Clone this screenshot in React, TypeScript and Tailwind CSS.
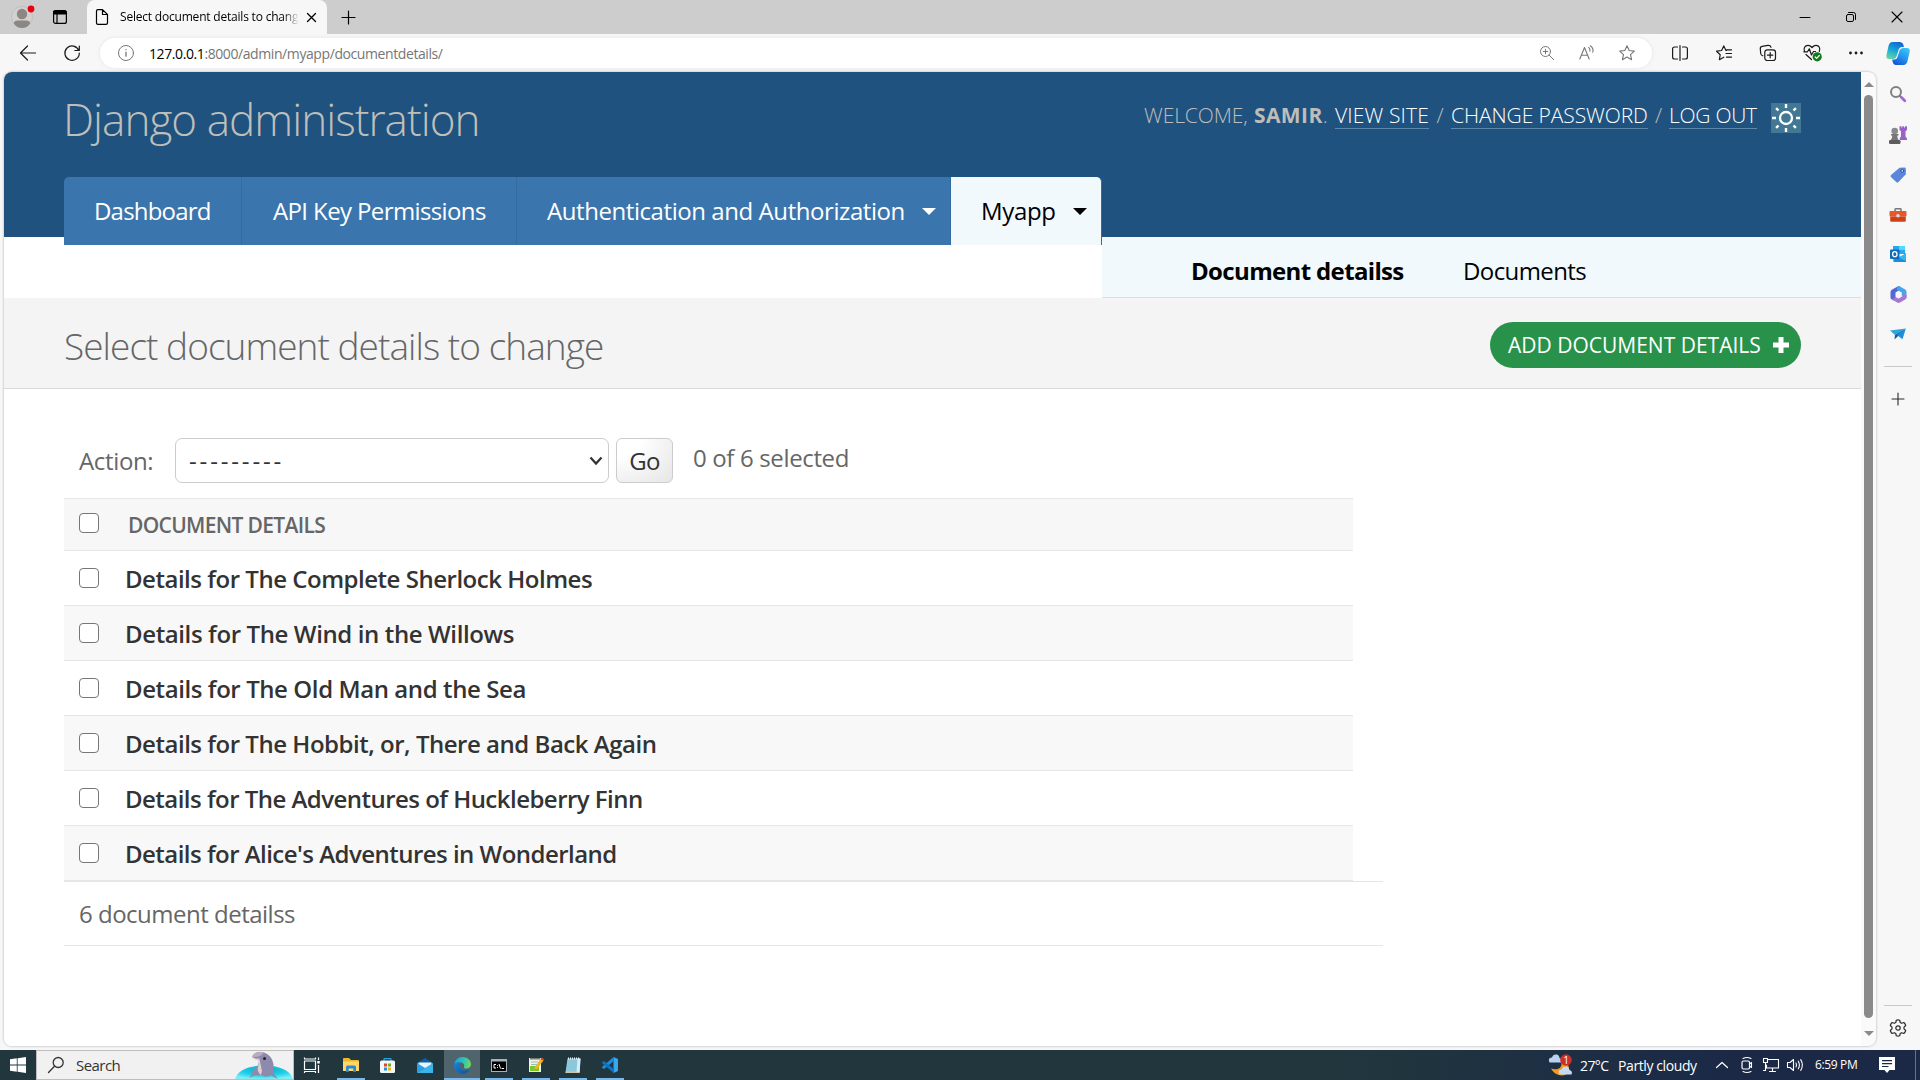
import type { ReactNode } from "react";

const rows = [
  { title: "Details for The Complete Sherlock Holmes", tracking: "tracking-[-0.48px]" },
  { title: "Details for The Wind in the Willows", tracking: "tracking-[-0.38px]" },
  { title: "Details for The Old Man and the Sea", tracking: "tracking-[-0.41px]" },
  { title: "Details for The Hobbit, or, There and Back Again", tracking: "tracking-[-0.475px]" },
  { title: "Details for The Adventures of Huckleberry Finn", tracking: "tracking-[-0.53px]" },
  { title: "Details for Alice's Adventures in Wonderland", tracking: "tracking-[-0.53px]" },
];

function Icon({ size = 20, box = 20, children, className = "" }: { size?: number; box?: number; children: ReactNode; className?: string }) {
  return (
    <svg width={size} height={size} viewBox={`0 0 ${box} ${box}`} fill="none" stroke="currentColor" strokeLinecap="round" strokeLinejoin="round" className={`shrink-0 overflow-visible ${className}`}>
      {children}
    </svg>
  );
}

function TitleBar() {
  return (
    <div className="flex h-[34px] shrink-0 bg-[#cdcdcd] text-black">
      <div className="flex w-[87px] items-center pl-[11px]">
        <Icon size={22} box={22}>
          <circle cx="11" cy="11" r="10.5" fill="#d3d1cf" stroke="#c3bfba" strokeWidth="1" />
          <circle cx="11" cy="8" r="5.2" fill="#8b8785" stroke="none" />
          <path d="M2.8 17.5c0-2 2-3 3.500-3h9.400c1.500 0 3.500 1 3.500 3-2 3-5 4.500-8.200 4.500s-6.200-1.500-8.200-4.500z" fill="#8b8785" stroke="none" />
          <circle cx="20" cy="3" r="3.400" fill="#e80010" stroke="none" />
        </Icon>
        <Icon size={14} box={14} className="ml-5">
          <rect x="0.600" y="0.600" width="12.800" height="12.800" rx="2" strokeWidth="1.200" />
          <path d="M1 1h12v3H1z" fill="#000" strokeWidth="1" />
          <path d="M4 4v9" strokeWidth="1.200" />
        </Icon>
      </div>
      <div className="flex w-[240px] items-center rounded-t-[8px] bg-[#f7f7f7] pl-[8px]">
        <Icon size={16} box={16} className="mr-[9px]">
          <path d="M1.500 2Q1.500.6 3 .6H7.500L12.500 5.500V14Q12.500 15.400 11 15.400H3Q1.500 15.400 1.500 14ZM7.500.8V5.500H12.400" strokeWidth="1.200" />
        </Icon>
        <div className="w-[178px] overflow-hidden whitespace-nowrap bg-gradient-to-r from-black from-90% to-[#e8e8e8] bg-clip-text text-[12px] tracking-[-0.2px] text-transparent">
          Select document details to change
        </div>
        <Icon size={9} box={9} className="ml-[9px]">
          <path d="M.5.500 8.500 8.500M8.500.500.500 8.500" strokeWidth="1.300" />
        </Icon>
      </div>
      <div className="flex flex-1 items-center pl-[15px]">
        <Icon size={13} box={13}>
          <path d="M6.500 0v13M0 6.500h13" strokeWidth="1.200" />
        </Icon>
      </div>
      <div className="flex w-[138px] items-center">
        <div className="flex w-[46px] justify-center"><Icon size={10} box={10}><path d="M0 5.500h10" strokeWidth="1" /></Icon></div>
        <div className="flex w-[46px] justify-center">
          <Icon size={10} box={10}>
            <rect x="0.500" y="2.500" width="7" height="7" rx="1.500" strokeWidth="1" />
            <path d="M2.500.500H7.500Q9.500.500 9.500 2.500V7.500" strokeWidth="1" />
          </Icon>
        </div>
        <div className="flex w-[46px] justify-center"><Icon size={10} box={10}><path d="M0 0 10 10M10 0 0 10" strokeWidth="1.100" /></Icon></div>
      </div>
    </div>
  );
}

const STAR = "M8 .8 10.200 5.500 15.300 6.100 11.500 9.600 12.600 14.700 8 12.100 3.400 14.700 4.500 9.600.7 6.100 5.800 5.500Z";

function Toolbar() {
  return (
    <div className="flex h-[38px] shrink-0 items-center bg-[#f7f7f7] text-[#1b1b1b]">
      <div className="flex w-[100px] items-center pl-5">
        <Icon size={16} box={16}><path d="M15.500 8H.500M7.500 1 .500 8 7.500 15" strokeWidth="1.200" /></Icon>
        <Icon size={16} box={16} className="ml-7">
          <path d="M14.800 5.500A7.200 7.200 0 1 0 15.300 8M15.300 1V5.500H10.800" strokeWidth="1.200" />
        </Icon>
      </div>
      <div className="flex h-[30px] w-[1552px] items-center rounded-full bg-white pr-[5px] pl-[18px] text-[#767676] shadow-[0_0_4px_rgba(0,0,0,0.08)]">
        <Icon size={16} box={16}>
          <circle cx="8" cy="8" r="7.500" strokeWidth="1" />
          <path d="M8 7.200v4M8 4.600v.1" strokeWidth="1.300" />
        </Icon>
        <div className="ml-[15px] flex-1 text-[14px] tracking-[-0.41px] text-[#767676]">
          <span className="text-black">127.0.0.1</span>:8000/admin/myapp/documentdetails/
        </div>
        <div className="flex w-10 justify-center">
          <Icon size={14} box={14}>
            <circle cx="5.500" cy="5.500" r="5" strokeWidth="1" />
            <path d="M9.200 9.200 13.700 13.700M5.500 3.300V7.700M3.300 5.500H7.700" strokeWidth="1" />
          </Icon>
        </div>
        <div className="flex w-10 justify-center">
          <Icon size={16} box={16}>
            <path d="M.8 14 5.500 2.500 10.200 14M2.500 10.200H8.600M9.700 2.400Q11.500 4 10.900 6.200M11.300.8Q15 3.500 13.800 7.200" strokeWidth="1.100" />
          </Icon>
        </div>
        <div className="flex w-10 justify-center"><Icon size={16} box={16}><path d={STAR} strokeWidth="1.100" /></Icon></div>
      </div>
      <div className="flex pl-[6px]">
        <div className="flex w-11 items-center justify-center">
          <Icon size={16} box={16}><path d="M5.500 2H2.500Q.600 2 .600 4V12Q.600 14 2.500 14H5.500M10.500 2H13.500Q15.400 2 15.400 4V12Q15.400 14 13.500 14H10.500M8 .5V15.500" strokeWidth="1.200" /></Icon>
        </div>
        <div className="flex w-11 items-center justify-center">
          <Icon size={16} box={16}>
            <path d="M10.500 5.500H10L7.800.9 5.600 5.500.6 6.200 4.200 9.700 3.400 14.700 7.800 12.200M10.500 4.800H15.500M10 8.500H15.500M10.500 12.200H15.500" strokeWidth="1.200" />
          </Icon>
        </div>
        <div className="flex w-11 items-center justify-center">
          <Icon size={16} box={16}>
            <rect x="4.800" y="4.800" width="10.700" height="10.700" rx="2.500" strokeWidth="1.200" />
            <path d="M10.200 7.500V12.800M7.500 10.200H12.800M2.800 10.800Q1 10.200.700 8.500L.3 4Q.1 1.800 2 1.400L8 .4Q10.300.2 11 2.200" strokeWidth="1.200" />
          </Icon>
        </div>
        <div className="flex w-11 items-center justify-center">
          <Icon size={18} box={18}>
            <path d="M1.500 7.500C.3 4.500 1.800 1.300 5 1.300 7 1.300 8 2.300 9 3.500 10 2.300 11 1.300 13 1.300 16.300 1.300 17.500 4.500 16.300 7.500M3 10.500 8.500 15.500M.8 7.800H4.500L6.300 4.800 8.500 11 10.500 7.500H12.500" strokeWidth="1.200" />
            <circle cx="14.200" cy="12.800" r="4.600" fill="#117a1a" stroke="none" />
            <path d="M12.200 13 13.600 14.300 16.300 11.500" stroke="#fff" strokeWidth="1.200" />
          </Icon>
        </div>
        <div className="flex w-11 items-center justify-center">
          <Icon size={16} box={16}><path d="M2.500 8h.01M8 8h.01M13.500 8h.01" strokeWidth="2.800" /></Icon>
        </div>
        <div className="flex w-10 items-center justify-center"><Copilot /></div>
      </div>
    </div>
  );
}

function Copilot() {
  return (
    <svg width="24" height="23" viewBox="0 0 24 23" className="shrink-0">
      <defs>
        <linearGradient id="cpA" x1="0.600" y1="0" x2="0.200" y2="1"><stop offset="0" stopColor="#1268d0" /><stop offset="0.450" stopColor="#12a3d8" /><stop offset="1" stopColor="#66d7a4" /></linearGradient>
        <linearGradient id="cpB" x1="0.800" y1="0" x2="0.200" y2="1"><stop offset="0" stopColor="#38c6f4" /><stop offset="0.500" stopColor="#2493f0" /><stop offset="1" stopColor="#1354d4" /></linearGradient>
      </defs>
      <path d="M6.500 0H14Q16.500 0 17.300 2.500L18 5H15.500Q13.500 5 12.700 7.500L10.500 14.500Q9.700 17 7 17H3Q0 17 .4 13.500L2.500 4Q3.500 0 6.500 0Z" fill="url(#cpA)" />
      <path d="M17.500 23H10Q7.500 23 6.700 20L6.200 17.500H8.500Q10.800 17.500 11.500 15L13.500 8.500Q14.300 6 17 6H21Q24.300 6 23.700 9.500L21.500 19Q20.500 23 17.500 23Z" fill="url(#cpB)" />
    </svg>
  );
}

function Slot({ children }: { children: ReactNode }) {
  return <div className="flex h-10 w-full shrink-0 items-center justify-center">{children}</div>;
}

function Sidebar() {
  return (
    <div className="flex w-[44px] shrink-0 flex-col items-center pt-[2px] text-[#2b2b2b]">
      <Slot>
        <Icon size={16} box={16}>
          <circle cx="6" cy="6" r="5" stroke="#808080" strokeWidth="2" />
          <path d="M10 10 11 11" stroke="#777" strokeWidth="2" />
          <path d="M11.500 11.500 14.800 14.800" stroke="#a466d6" strokeWidth="2.800" />
        </Icon>
      </Slot>
      <Slot>
        <Icon size={18} box={18} className="mt-[1px]">
          <g stroke="none">
            <path d="M10.500.3H12.400V1.500H13.300V.3H15V1.500H16V.3H18V4L16.500 5.200V10.500L18 12.500V14H10.800V12L12 10.500V5.200L10.500 4Z" fill="#9a62c8" />
            <circle cx="5.700" cy="5" r="3.300" fill="#8a8a8a" />
            <path d="M2 8H9.500V9.500H8.300C8.300 12 9 13.500 10.500 14.500H1C2.500 13.500 3.200 12 3.200 9.500H2Z" fill="#777" />
            <rect x="0" y="14" width="11.500" height="4" rx="1.300" fill="#5d5d5d" />
          </g>
        </Icon>
      </Slot>
      <Slot>
        <Icon size={16} box={16} className="mt-[1px]">
          <path d="M9.500.8 14.500.5Q15.800.5 15.800 1.800V7.300L8.500 15Q7.300 16 6.200 15L.9 10Q0 9 1 8Z" fill="#5b86dc" stroke="none" />
          <circle cx="12.300" cy="3.800" r="1.400" fill="#cfe0ff" stroke="#2d4f9c" strokeWidth="1" />
        </Icon>
      </Slot>
      <Slot>
        <Icon size={18} box={18} className="mt-[1px]">
          <path d="M6 5.500V3.500Q6 2.800 6.700 2.800H11.300Q12 2.800 12 3.500V5.500" stroke="#777" strokeWidth="1.500" />
          <rect x="0.500" y="5" width="17" height="5.500" rx="1" fill="#e8562a" stroke="none" />
          <path d="M1.200 10.500H16.800V14.500Q16.800 15.700 15.600 15.700H2.400Q1.200 15.700 1.200 14.500Z" fill="#cb4118" stroke="none" />
          <circle cx="9" cy="9.800" r="1.800" fill="#dfdfdf" stroke="none" />
        </Icon>
      </Slot>
      <Slot>
        <Icon size={16} box={16}>
          <g stroke="none">
            <path d="M3 0H15V8H3Z" fill="#28a8ea" /><path d="M9 0H15V4H9Z" fill="#50d9ff" />
            <path d="M3 8 9.500 12 16 7V16H3.500Z" fill="#1490df" /><path d="M16 7.500V15L8 11.500Z" fill="#33b7f2" />
            <rect x="0" y="3.500" width="9.500" height="9.500" rx="1" fill="#0f6cbd" />
          </g>
          <ellipse cx="4.800" cy="8.200" rx="2.200" ry="2.500" stroke="#fff" strokeWidth="1.300" />
        </Icon>
      </Slot>
      <Slot>
        <Icon size={17} box={17}>
          <g stroke="none">
            <path d="M8.500 0 1.800 3.700Q.5 4.500.5 6V11.500Q.5 13 2 13.700L5.500 15 5.700 11V6.500L10 3.800V.8Q9.500-.3 8.500 0Z" fill="#5566d8" />
            <path d="M8 .2Q9-.2 10 .5L15.200 3.600Q16.500 4.400 16.500 6V11.500L11.500 9.500V6.500L7 4Q6.800 1 8 .2Z" fill="#44a6ea" />
            <path d="M16.500 9V11.500Q16.500 13 15.200 13.600L10 16.600Q8.500 17.300 7.200 16.600L2 13.600 5.700 11 8.500 12.500 12 10.500 13.500 6.800Z" fill="#a678d4" />
            <path d="M5.700 6.500 8.500 5 11.500 6.500V10.500L8.500 12.300 5.700 10.800Z" fill="#f7f7f7" />
          </g>
        </Icon>
      </Slot>
      <Slot>
        <Icon size={16} box={16}>
          <g stroke="none">
            <path d="M0 4.500 15.800 2.500 5 9Z" fill="#2ea6e0" /><path d="M5 9 15.800 2.500 4.500 13.500Z" fill="#0f5c9c" /><path d="M7 9 15.800 2.500 12.500 13.300Z" fill="#1c8fe0" />
          </g>
        </Icon>
      </Slot>
      <div className="mt-[12px] h-px w-7 bg-[#c9c9c9]" />
      <div className="mt-[12px]"><Slot><Icon size={12} box={12}><path d="M6 0v12M0 6h12" strokeWidth="1.100" /></Icon></Slot></div>
      <div className="mt-auto h-px w-7 bg-[#c9c9c9]" />
      <div className="mt-[2px] -mb-[2px]">
        <Slot>
          <Icon size={18} box={18}>
            <circle cx="9" cy="9" r="2.200" strokeWidth="1.200" />
            <path d="M7.300 1.200Q9 .5 10.700 1.200L11.200 3.500 12.700 4.300 14.900 3.500Q16.300 4.700 16.700 6.500L15 8.100V9.900L16.700 11.500Q16.300 13.300 14.900 14.500L12.700 13.700 11.200 14.500 10.700 16.800Q9 17.500 7.300 16.800L6.800 14.500 5.300 13.700 3.100 14.500Q1.700 13.300 1.300 11.500L3 9.900V8.100L1.300 6.500Q1.700 4.700 3.100 3.500L5.300 4.300 6.800 3.500Z" strokeWidth="1.200" />
          </Icon>
        </Slot>
      </div>
    </div>
  );
}

function Caret() {
  return <svg width="14" height="7" viewBox="0 0 14 7" className="shrink-0"><path d="M0 0H14L7 7Z" fill="currentColor" /></svg>;
}

function Header() {
  return (
    <header className="relative z-10 h-[165px] bg-[#205280]">
      <div className="flex h-[105px] items-start justify-between pr-[60px] pl-[59px]">
        <h1 className="mt-[17px] text-[44px] leading-[60px] font-light tracking-[-0.96px] whitespace-nowrap text-[#bfbfba]">Django administration</h1>
        <div className="mt-[28px] flex items-start text-[21px] leading-[30px] font-light whitespace-nowrap text-[#bdbdb9]">
          <span className="w-[110px] tracking-[-0.1px]">WELCOME,</span>
          <span className="w-[81px]"><b className="font-bold tracking-[0.4px]">SAMIR</b>.</span>
          <span className="h-[29px] w-[94px] border-b border-[#5f87ac] tracking-[0.15px] text-white">VIEW SITE</span>
          <span className="w-[22px] text-center">/</span>
          <span className="h-[29px] w-[197px] border-b border-[#5f87ac] tracking-[-0.08px] text-white">CHANGE PASSWORD</span>
          <span className="w-[21px] text-center">/</span>
          <span className="h-[29px] w-[88px] border-b border-[#5f87ac] tracking-[-0.25px] text-white">LOG OUT</span>
          <span className="mt-[3px] ml-[14px] flex h-[30px] w-[30px] items-center justify-center bg-[#427894] text-white">
            <Icon size={28} box={28}>
              <circle cx="14" cy="14" r="6" strokeWidth="2.300" />
              <path d="M14 0V4M14 24V28M0 14H4M24 14H28M4.100 4.100 6.500 6.500M21.500 21.500 23.900 23.900M4.100 23.900 6.500 21.500M21.500 6.500 23.900 4.100" strokeWidth="2.400" strokeLinecap="butt" />
            </Icon>
          </span>
        </div>
      </div>
      <nav className="ml-[60px] flex h-[68px] w-[1038px] overflow-hidden rounded-t-[5px] text-[24px] whitespace-nowrap text-white">
        <a className="flex w-[178px] items-center border-r border-[#356b9f] bg-[#3b75ad] pl-[30px] tracking-[-0.8px]">Dashboard</a>
        <a className="flex w-[275px] items-center border-r border-[#356b9f] bg-[#3b75ad] pl-[31px] tracking-[-0.62px]">API Key Permissions</a>
        <a className="flex w-[434px] items-center border-r border-[#356b9f] bg-[#3b75ad] pl-[30px] tracking-[-0.43px]"><span className="w-[375px]">Authentication and Authorization</span><Caret /></a>
        <a className="flex flex-1 items-center rounded-tr-[5px] border-r border-[#356b9f] bg-[#f1f9fc] pl-[30px] tracking-[-0.35px] text-black"><span className="w-[92px]">Myapp</span><Caret /></a>
      </nav>
    </header>
  );
}

function Box() {
  return <span className="block h-5 w-5 shrink-0 rounded-[4px] border-[1.5px] border-[#767676] bg-white" />;
}

function Page() {
  return (
    <div className="flex w-[1857px] flex-col bg-white">
      <Header />
      <div className="ml-[1098px] flex h-[61px] items-center border-b border-[#cfe3ee] bg-[#f1f9fc] pt-[7px] pl-[89px] text-[24px] whitespace-nowrap text-black">
        <span className="w-[272px] font-bold tracking-[-0.65px]">Document detailss</span>
        <span className="tracking-[-0.6px]">Documents</span>
      </div>
      <div className="flex h-[91px] shrink-0 items-center justify-between border-b border-[#dadada] bg-[#f4f4f4] pt-[4px] pr-[60px] pl-[60px]">
        <h2 className="pt-[2px] text-[37px] leading-[50px] font-light tracking-[-0.95px] whitespace-nowrap text-[#666]">Select document details to change</h2>
        <a className="flex h-[46px] w-[311px] items-center rounded-full bg-[#28914a] pl-[18px] text-[21px] whitespace-nowrap text-white">
          <span className="w-[265px] pt-[2px]">ADD DOCUMENT DETAILS</span>
          <svg width="16" height="16" viewBox="0 0 16 16"><path d="M5.500 0H10.500V5.500H16V10.500H10.500V16H5.500V10.500H0V5.500H5.500Z" fill="#fff" /></svg>
        </a>
      </div>
      <main className="pt-[49px] pl-[60px] text-[24px] text-[#666]">
        <div className="flex h-[45px] items-center whitespace-nowrap">
          <span className="w-[111px] pt-[1px] pl-[15px] tracking-[-0.35px]">Action:</span>
          <span className="flex h-[45px] w-[434px] items-center justify-between rounded-[7px] border border-[#ccc] pr-[5px] pl-[13px] text-[#333]">
            <span className="pt-[1px] tracking-[2.850px]">---------</span>
            <Icon size={14} box={14}><path d="M1.500 3.500 7 9.500 12.500 3.500" strokeWidth="2.200" strokeLinecap="butt" strokeLinejoin="miter" /></Icon>
          </span>
          <span className="ml-[7px] flex h-[45px] w-[57px] items-center justify-center rounded-[6px] border border-[#ccc] bg-[radial-gradient(ellipse_at_top_left,#ffffff_30%,#dedede_120%)] pt-[1px] tracking-[-0.8px] text-[#333]">Go</span>
          <span className="ml-[20px] pb-[6px] tracking-[-0.35px]">0 of 6 selected</span>
        </div>
        <div className="mt-[15px] flex h-[53px] w-[1289px] items-center border-y border-[#e6e6e6] bg-[#f7f7f7] pl-[15px]">
          <span className="pb-[4px]"><Box /></span>
          <span className="ml-[29px] pt-[2px] text-[21px] font-semibold tracking-[-0.68px]">DOCUMENT DETAILS</span>
        </div>
        {rows.map((r, i) => (
          <div key={r.title} className={`flex h-[55px] w-[1289px] items-center border-b border-[#e6e6e6] pl-[15px] ${i % 2 ? "bg-[#f8f8f8]" : "bg-white"}`}>
            <Box />
            <span className={`ml-[26px] pt-[2px] font-semibold whitespace-nowrap text-[#333] ${r.tracking}`}>{r.title}</span>
          </div>
        ))}
        <div className="flex h-[65px] w-[1319px] items-center border-y border-[#e6e6e6] pl-[15px] tracking-[-0.5px]">6 document detailss</div>
      </main>
    </div>
  );
}

function TaskIcon({ children, open = false, w, active = false }: { children: ReactNode; open?: boolean; w: string; active?: boolean }) {
  return (
    <div className={`flex h-[30px] flex-col items-center justify-between ${w} ${active ? "bg-[#4f646c]" : ""}`}>
      <div className="flex flex-1 items-center pt-[2px]">{children}</div>
      <div className={`h-[2px] ${active ? "w-full" : "w-[28px]"} ${open ? "bg-[#76b9ed]" : ""}`} />
    </div>
  );
}

function Taskbar() {
  return (
    <div className="flex h-[30px] shrink-0 items-center bg-gradient-to-r from-[#21363d] from-70% to-[#1b2947] to-90% text-white">
      <div className="flex w-[36px] justify-center">
        <svg width="16" height="16" viewBox="0 0 16 16" fill="#fff"><path d="M0 2.200 6.800 1.300V7.600H0ZM7.600 1.200 16 0V7.600H7.600ZM0 8.400H6.800V14.700L0 13.800ZM7.600 8.400H16V16L7.600 14.800Z" /></svg>
      </div>
      <div className="flex h-[30px] w-[258px] items-center border border-[#bdbdbd] bg-[#f1f1f1] pl-[11px] text-[#333]">
        <Icon size={16} box={16}><circle cx="10.200" cy="5.500" r="5" strokeWidth="1.300" /><path d="M6.500 9.200.500 15.500" strokeWidth="1.300" /></Icon>
        <span className="ml-[12px] flex-1 text-[15px] tracking-[-0.55px]">Search</span>
        <svg width="58" height="28" viewBox="0 0 58 28">
          <defs><radialGradient id="pool" cx="0.500" cy="0.300" r="0.700"><stop offset="0" stopColor="#0aa6c4" /><stop offset="0.600" stopColor="#1fd0ea" /><stop offset="1" stopColor="#7ceef6" /></radialGradient></defs>
          <path d="M0 28C3 19 14 14.500 29 14.500S55 19 58 28Z" fill="url(#pool)" />
          <path d="M17 6C19 1.500 24 0 29 1.500 36 4 39.500 11 38.500 18L39 23 43 28 36 24.500Q31 27 26 24L19 24.500 14.500 27 19 18Q24 15 24 9.500Z" fill="#8e8aac" />
          <path d="M17 6C19 8 22 7.500 24.500 7.500L25.500 13 27 20 26 24Q22 21 23 16L24 9.500 19 8Z" fill="#d9cfd2" />
          <path d="M17 6Q22 6.500 26 4.500L29 1.500Q22-.5 19 3Z" fill="#b9adc0" />
          <circle cx="29.500" cy="7.500" r="1.500" fill="#1f2235" />
        </svg>
      </div>
      <TaskIcon w="w-[39px] pr-[3px]">
        <Icon size={16} box={16}><path d="M.5 4H11.500V12.500H.500ZM.500.500V2H11.500V.500M.500 16V14.500H11.500V16M14.500.500V3M14.500 8V16" strokeWidth="1.200" strokeLinecap="butt" /><path d="M14.500 4V6.500" strokeWidth="2.500" strokeLinecap="butt" /></Icon>
      </TaskIcon>
      <TaskIcon w="w-[36px]" open>
        <svg width="16" height="14" viewBox="0 0 16 14"><path d="M0 1Q0 0 1 0H6L8 2H15Q16 2 16 3V13H0Z" fill="#f2b52b" /><path d="M0 3.500H16V13H0Z" fill="#ffd868" /><path d="M3 14V9Q3 7.500 4.500 7.500H11.500Q13 7.500 13 9V14H10.300V10.500H5.700V14Z" fill="#2f87d0" /></svg>
      </TaskIcon>
      <TaskIcon w="w-[37px]">
        <svg width="15" height="15" viewBox="0 0 15 15"><path d="M4 3V1Q4 .6 4.600.6H10.400Q11 .6 11 1V3" fill="none" stroke="#26a7e0" strokeWidth="1.200" /><rect y="2.500" width="15" height="12.500" rx="1.500" fill="#f4f6f7" /><path d="M4 5.500H7V8.500H4Z" fill="#e0452a" /><path d="M8 5.500H11V8.500H8Z" fill="#6fae2b" /><path d="M4 9.500H7V12.500H4Z" fill="#2093dc" /><path d="M8 9.500H11V12.500H8Z" fill="#f3b20f" /></svg>
      </TaskIcon>
      <TaskIcon w="w-[38px]">
        <svg width="16" height="15" viewBox="0 0 16 15"><path d="M0 5 8 0 16 5V15H0Z" fill="#0f5ea8" /><path d="M1.500 4.500H14.500V10H1.500Z" fill="#e9f4fb" /><path d="M0 5 8 10 0 15Z" fill="#2f9fe0" /><path d="M16 5V15H0Z" fill="#39b5ec" /></svg>
      </TaskIcon>
      <TaskIcon w="w-[36px]" open active>
        <svg width="17" height="17" viewBox="0 0 17 17">
          <defs>
            <linearGradient id="edgeTop" x1="0" y1="0.300" x2="1" y2="0.500"><stop offset="0" stopColor="#1c9de0" /><stop offset="0.550" stopColor="#2fc3b8" /><stop offset="1" stopColor="#6fdc55" /></linearGradient>
            <linearGradient id="edgeBase" x1="0" y1="0" x2="1" y2="1"><stop offset="0" stopColor="#1a86dc" /><stop offset="1" stopColor="#0d4f9e" /></linearGradient>
          </defs>
          <path d="M0 8.500A8.500 8.500 0 0 1 8.500 0C13.500 0 17 3.500 17 7.300 17 10 15 11.500 12.500 11.500 10.500 11.500 9.500 10.700 10 9.700 11 7.500 9 5.500 6.500 5.500 3 5.500 1 7.500 0 8.500Z" fill="url(#edgeTop)" />
          <path d="M0 8.500C.5 5.500 4 4.500 7 6 5 7 5 9.500 6.300 11.300 8.300 14 12.500 14 15.500 12.800 14 15.500 11.500 17 8.500 17A8.500 8.500 0 0 1 0 8.500Z" fill="url(#edgeBase)" />
        </svg>
      </TaskIcon>
      <TaskIcon w="w-[37px]" open>
        <svg width="16" height="13" viewBox="0 0 16 13"><rect width="16" height="13" fill="#a9b1b5" /><rect x="1" y="2.500" width="14" height="9.500" fill="#000" /><path d="M5 5.500H3V9H5M6.500 6v.8M6.500 8.200V9M8 5 9.500 9.500M10.500 9.500H13" stroke="#fff" fill="none" /></svg>
      </TaskIcon>
      <TaskIcon w="w-[37px]" open>
        <svg width="16" height="16" viewBox="0 0 16 16"><path d="M1 1H13V15H1Z" fill="#f2f2ea" /><path d="M2 1H12V2.500H2Z" fill="#77756f" /><path d="M3 5H10M3 7.500H9" stroke="#9bb" /><path d="M2 9H11V14H2Z" fill="#79c829" /><path d="M6 11.500 12.500 2 15.500 3.500 9 12Z" fill="#f3b51c" /><path d="M12.500 2 13.500.5 16 2 15.500 3.500Z" fill="#d9432e" /></svg>
      </TaskIcon>
      <TaskIcon w="w-[37px]" open>
        <svg width="16" height="16" viewBox="0 0 16 16"><path d="M2.500 1.500H15.500L14.500 15.500H.500Z" fill="#8cc7db" /><path d="M12.500 1.500H15.500L14.700 15.500H11.500Z" fill="#d9eef3" /><path d="M3 1.500H15" stroke="#e8f4f8" strokeWidth="2" strokeDasharray="1 1" /><path d="M.500 15.300H14.500" stroke="#d8cfae" strokeWidth="1.200" /></svg>
      </TaskIcon>
      <TaskIcon w="w-[37px]" open>
        <svg width="16" height="16" viewBox="0 0 16 16"><path d="M11.500 0 16 2V14L11.500 16Z" fill="#37a8f0" /><path d="M11.500 0V4.300L2 12 0 10.700V10Z" fill="#1f8ddb" /><path d="M11.500 16V11.700L2 4 0 5.300V6Z" fill="#0d73c0" /></svg>
      </TaskIcon>
      <div className="flex-1" />
      <svg width="25" height="22" viewBox="0 0 25 22" className="shrink-0">
        <path d="M13 8C15 13 10 17 3 14.500 6 20 12 22.500 17 21 23 18 22 11 17 8Z" fill="#f39b1e" />
        <path d="M1.500 8.500Q-.5 4 4 3.500 5 0 8.500.5 11 .8 11.500 4 14 4.500 13 8.500Z" fill="#b9d2f3" />
        <path d="M11.500 20.500Q9 16 13.500 15.500 15 12 18 12.500 21 13 21.500 16 25 17 23.500 20.500Z" fill="#c5daf7" />
        <circle cx="18" cy="6" r="5.800" fill="#c9302c" />
        <text x="18" y="9.500" fontSize="10" fill="#fff" textAnchor="middle">1</text>
      </svg>
      <span className="ml-[7px] w-[38px] text-[14px] tracking-[-0.6px]">27°C</span>
      <span className="w-[98px] text-[14px] tracking-[-0.4px] whitespace-nowrap">Partly cloudy</span>
      <Icon size={12} box={12}><path d="M.500 8.500 6 3.500 11.500 8.500" strokeWidth="1.200" /></Icon>
      <Icon size={16} box={16} className="ml-[11px]"><rect x="3" y="4" width="7.500" height="8" rx="1.500" strokeWidth="1.200" /><path d="M10.500 7 12.500 5.500V10.500L10.500 9M4 1.500Q8 -.5 12 1.500M4 14.500Q8 16.500 12 14.500" strokeWidth="1.100" /></Icon>
      <Icon size={16} box={16} className="ml-[8px]"><path d="M4.500 2.500H15.500V11H3.500V8M9.500 11V14M6.500 14.500H12.500M.5 1.500H4.500V5.500H.5ZM2.500 5.500V13.500H.5" strokeWidth="1.100" /></Icon>
      <Icon size={16} box={16} className="ml-[8px]"><path d="M.5 5.500H3L6.500 2.500V13.500L3 10.500H.500ZM9 6Q10 8 9 10M11.300 4.200Q13.500 8 11.300 11.800M13.700 2.600Q17 8 13.700 13.400" strokeWidth="1.100" /></Icon>
      <span className="ml-[12px] w-[64px] text-[12px] tracking-[-0.35px] whitespace-nowrap">6:59 PM</span>
      <svg width="16" height="16" viewBox="0 0 16 16"><path d="M0 0H16V13H10.500L8 16 5.500 13H0Z" fill="#fff" /><path d="M3 3.700H13M3 6.600H13M3 9.500H9.500" stroke="#1b2947" strokeWidth="1.200" /></svg>
      <div className="mr-[4px] ml-[20px] h-[30px] w-px bg-[#66718a]" />
    </div>
  );
}

export default function App() {
  return (
    <div className="flex h-[1080px] w-[1920px] flex-col overflow-hidden bg-[#f7f7f7] font-['Open_Sans',sans-serif]">
      <TitleBar />
      <Toolbar />
      <div className="flex h-[978px] shrink-0 pb-[4px] pl-[4px]">
        <div className="flex h-[974px] w-[1872px] overflow-hidden rounded-[8px] bg-[#fafafa] shadow-[0_0_2px_1px_rgba(0,0,0,0.14)]">
          <Page />
          <div className="flex w-[15px] flex-col items-center py-[10px] text-[#8a8a8a]">
            <svg width="10" height="5" viewBox="0 0 10 5"><path d="M0 5H10L5 0Z" fill="currentColor" /></svg>
            <div className="mt-[8px] mb-[13px] w-[9px] flex-1 rounded-full bg-[#8a8a8a]" />
            <svg width="10" height="5" viewBox="0 0 10 5"><path d="M0 0H10L5 5Z" fill="currentColor" /></svg>
          </div>
        </div>
        <Sidebar />
      </div>
      <Taskbar />
    </div>
  );
}
